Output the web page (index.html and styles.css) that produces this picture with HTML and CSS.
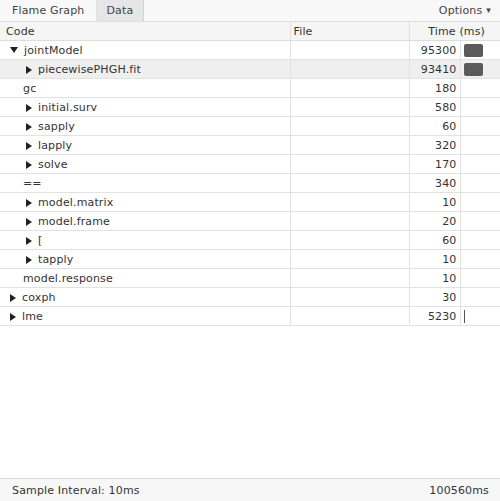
FILE: index.html
```html
<!DOCTYPE html>
<html>
<head>
<meta charset="utf-8">
<link rel="stylesheet" href="styles.css">
</head>
<body>
<div class="app">
  <div class="topbar">
    <div class="tabs">
      <div class="tab">Flame Graph</div>
      <div class="tab active">Data</div>
    </div>
    <div class="options">Options <span class="caret">▾</span></div>
  </div>
  <div class="main">
    <table class="grid">
      <colgroup>
        <col class="c-code"><col class="c-file"><col class="c-time"><col class="c-bar">
      </colgroup>
      <thead>
        <tr><th class="h-code">Code</th><th class="h-file">File</th><th class="h-time" colspan="2">Time (ms)</th></tr>
      </thead>
      <tbody>
        <tr><td class="code l0"><span class="tri down"></span>jointModel</td><td></td><td class="num">95300</td><td class="barcell"><span class="bar" style="width:19px"></span></td></tr>
        <tr class="hl"><td class="code l1"><span class="tri"></span>piecewisePHGH.fit</td><td></td><td class="num">93410</td><td class="barcell"><span class="bar" style="width:19px"></span></td></tr>
        <tr><td class="code leaf1">gc</td><td></td><td class="num">180</td><td class="barcell"></td></tr>
        <tr><td class="code l1"><span class="tri"></span>initial.surv</td><td></td><td class="num">580</td><td class="barcell"></td></tr>
        <tr><td class="code l1"><span class="tri"></span>sapply</td><td></td><td class="num">60</td><td class="barcell"></td></tr>
        <tr><td class="code l1"><span class="tri"></span>lapply</td><td></td><td class="num">320</td><td class="barcell"></td></tr>
        <tr><td class="code l1"><span class="tri"></span>solve</td><td></td><td class="num">170</td><td class="barcell"></td></tr>
        <tr><td class="code leaf1">==</td><td></td><td class="num">340</td><td class="barcell"></td></tr>
        <tr><td class="code l1"><span class="tri"></span>model.matrix</td><td></td><td class="num">10</td><td class="barcell"></td></tr>
        <tr><td class="code l1"><span class="tri"></span>model.frame</td><td></td><td class="num">20</td><td class="barcell"></td></tr>
        <tr><td class="code l1"><span class="tri"></span>[</td><td></td><td class="num">60</td><td class="barcell"></td></tr>
        <tr><td class="code l1"><span class="tri"></span>tapply</td><td></td><td class="num">10</td><td class="barcell"></td></tr>
        <tr><td class="code leaf1">model.response</td><td></td><td class="num">10</td><td class="barcell"></td></tr>
        <tr><td class="code l0"><span class="tri"></span>coxph</td><td></td><td class="num">30</td><td class="barcell"></td></tr>
        <tr><td class="code l0"><span class="tri"></span>lme</td><td></td><td class="num">5230</td><td class="barcell"><span class="bar thin" style="width:1px"></span></td></tr>
      </tbody>
    </table>
  </div>
  <div class="footer">
    <span>Sample Interval: 10ms</span>
    <span>100560ms</span>
  </div>
</div>
</body>
</html>
```
FILE: styles.css
```css
html, body {
  margin: 0;
  padding: 0;
  background: #ffffff;
}
body {
  font-family: "DejaVu Sans", sans-serif;
  font-size: 11px;
  letter-spacing: 0.15px;
  color: #333333;
}
.app {
  width: 500px;
  height: 501px;
  display: flex;
  flex-direction: column;
}
.topbar {
  height: 22px;
  box-sizing: border-box;
  display: flex;
  justify-content: space-between;
  align-items: stretch;
  background: #f8f8f8;
  border-bottom: 1px solid #dddddd;
}
.tabs {
  display: flex;
}
.tab {
  display: flex;
  align-items: center;
  padding: 0 11px 1px 12px;
  color: #444444;
}
.tab.active {
  background: #e6e6e6;
  border-left: 1px solid #e0e0e0;
  border-right: 1px solid #d4d4d4;
  padding: 0 10px 1px 10px;
}
.options {
  display: flex;
  align-items: center;
  padding: 0 9px 1px 0;
  color: #444444;
}
.caret {
  font-size: 9px;
  margin-left: 4px;
}
.main {
  flex: 1;
  overflow: hidden;
}
.grid {
  width: 500px;
  border-collapse: collapse;
  table-layout: fixed;
}
.c-code { width: 290px; }
.c-file { width: 119px; }
.c-time { width: 51px; }
.c-bar { width: 40px; }
.grid th {
  height: 18px;
  font-weight: normal;
  text-align: left;
  background: #f5f5f5;
  border-bottom: 1px solid #dddddd;
  border-right: 1px solid #e2e2e2;
  padding: 0 0 0 3px;
  color: #333333;
}
.grid th.h-code { padding-left: 6px; }
.grid th.h-time {
  text-align: right;
  padding-right: 15px;
  border-right: none;
}
.grid td {
  height: 18px;
  padding: 0;
  border-bottom: 1px solid #e2e2e2;
  border-right: 1px solid #e2e2e2;
  white-space: nowrap;
  overflow: hidden;
}
.grid td.barcell {
  border-right: none;
  padding-left: 3px;
}
.grid tr.hl td {
  background: #efefef;
}
.code.l0 { padding-left: 10px; }
.code.l1 { padding-left: 26px; }
.code.leaf1 { padding-left: 23px; }
.num {
  text-align: right;
  padding-right: 3px !important;
}
.tri {
  display: inline-block;
  width: 0;
  height: 0;
  border-top: 4px solid transparent;
  border-bottom: 4px solid transparent;
  border-left: 6px solid #222222;
  margin-right: 6px;
  vertical-align: -1px;
}
.tri.down {
  border-left: 4px solid transparent;
  border-right: 4px solid transparent;
  border-top: 6px solid #222222;
  border-bottom: none;
  margin-right: 6px;
  vertical-align: 1px;
}
.bar {
  display: block;
  height: 13px;
  background: #5a5a5a;
  border-radius: 2px;
}
.bar.thin {
  background: #555555;
  border-radius: 0;
}
.footer {
  height: 23px;
  box-sizing: border-box;
  border-top: 1px solid #d8d8d8;
  background: #f7f7f7;
  display: flex;
  justify-content: space-between;
  align-items: center;
  padding: 0 11px 0 12px;
  color: #333333;
}
```
